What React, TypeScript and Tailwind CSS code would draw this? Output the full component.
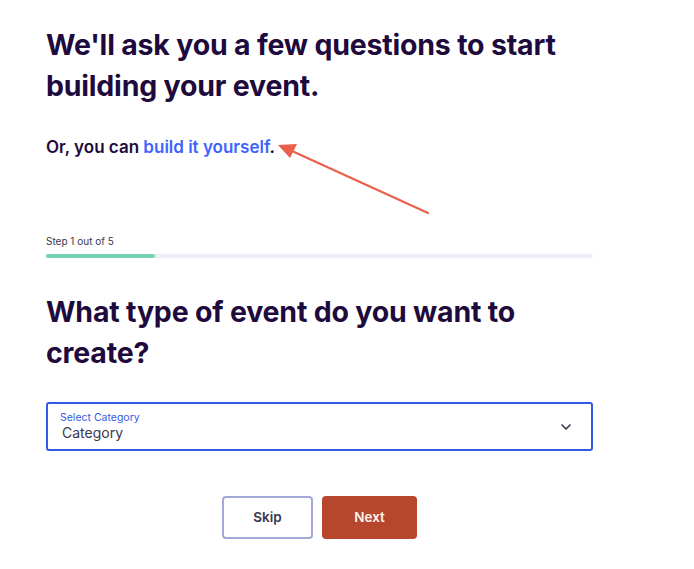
import { ChevronDown } from 'lucide-react';

export default function App() {
  return (
    <div className="relative w-[694px] h-[569px] bg-white overflow-hidden text-[#1e0a3c]" style={{ fontFamily: 'Inter, "Noto Sans", sans-serif' }}>
      <div className="w-[547px] ml-[46px] pt-[24px]">
        <h1 className="text-[28.5px] leading-[41px] font-bold tracking-[-0.2px]">
          We'll ask you a few questions to start building your event.
        </h1>
        <p className="mt-[31px] text-[17px] font-semibold leading-[20px]">
          Or, you can <a className="text-[#3d64ff]">build it yourself</a>.
        </p>

        {/* progress */}
        <div className="mt-[77px]">
          <div className="text-[10px] leading-[14px] text-[#39364f]">Step 1 out of 5</div>
          <div className="mt-[6px] h-[4px] rounded-full bg-[#eeedf8]">
            <div className="h-full w-[20%] rounded-full bg-[#72d4b5]" />
          </div>
        </div>

        <h2 className="mt-[33px] text-[28.5px] leading-[41px] font-bold tracking-[-0.2px]">
          What type of event do you want to create?
        </h2>

        {/* select */}
        <div className="mt-[29px] h-[49px] border-2 border-[#3659e3] rounded-[3px] flex items-center justify-between pl-[12px] pr-[17px]">
          <div className="flex flex-col">
            <span className="text-[10.5px] leading-[13px] text-[#3659e3]">Select Category</span>
            <span className="text-[14px] leading-[18px] text-[#39364f] pl-[2px]">Category</span>
          </div>
          <ChevronDown className="w-4 h-4 text-[#39364f]" strokeWidth={2.5} />
        </div>

        {/* buttons */}
        <div className="mt-[45px] flex justify-center gap-[9px]">
          <button className="w-[91px] h-[43px] border-2 border-[#a2a9d9] rounded-[4px] text-[13.5px] font-semibold text-[#39364f]">
            Skip
          </button>
          <button className="w-[95px] h-[43px] rounded-[4px] bg-[#b6472c] text-[13.5px] font-semibold text-[#fdf3f0]">
            Next
          </button>
        </div>
      </div>

      {/* annotation arrow */}
      <svg className="absolute left-0 top-0 pointer-events-none" width="694" height="569">
        <line x1="428" y1="213" x2="292" y2="151" stroke="#e9604b" strokeWidth="2.2" strokeLinecap="round" />
        <polygon points="278,145 297,144 290,158" fill="#e9604b" />
      </svg>
    </div>
  );
}
